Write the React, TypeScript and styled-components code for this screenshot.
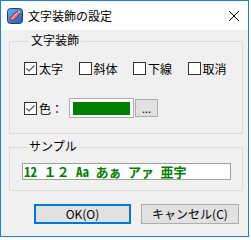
import styled, { createGlobalStyle } from "styled-components";

const GlobalStyle = createGlobalStyle`
  body {
    margin: 0;
    background: #ffffff;
    font-family: "Noto Sans CJK JP", sans-serif;
    font-size: 12px;
    color: #000;
  }
`;

const Window = styled.div`
  width: 249px;
  height: 237px;
  box-sizing: border-box;
  border: 1px solid #1883d7;
  background: #f0f0f0;
  display: flex;
  flex-direction: column;
`;

const TitleBar = styled.div`
  height: 29px;
  flex: none;
  background: #ffffff;
  display: flex;
  align-items: center;
  padding-left: 6px;
`;

const TitleText = styled.span`
  margin-left: 5px;
  font-size: 12px;
  line-height: 14px;
`;

const CloseIcon = styled.svg`
  margin-left: auto;
  margin-right: 9px;
`;

const Client = styled.div`
  flex: 1;
  display: flex;
  flex-direction: column;
  padding: 4px 0 0 8px;
`;

const GroupBox = styled.fieldset<{ $pad: string; $top?: number }>`
  margin: ${(p) => p.$top ?? 0}px 0 0 0;
  padding: ${(p) => p.$pad};
  width: 234px;
  box-sizing: border-box;
  border: 1px solid #dcdcdc;
  min-width: 0;
`;

const Legend = styled.legend`
  margin-left: 5px;
  padding: 0 2px 3px;
  font-size: 12px;
  line-height: 11px;
`;

const CheckRow = styled.div`
  display: flex;
  height: 13px;
  align-items: center;
`;

const CheckItem = styled.label<{ $w?: number }>`
  display: flex;
  align-items: center;
  width: ${(p) => (p.$w ? `${p.$w}px` : "auto")};
  font-size: 12px;
  line-height: 13px;
`;

const Box = styled.span`
  width: 13px;
  height: 13px;
  box-sizing: border-box;
  border: 1px solid #333333;
  background: #ffffff;
  margin-right: 2px;
  display: flex;
`;

const ColorRow = styled.div`
  display: flex;
  align-items: center;
  height: 20px;
  margin-top: 23px;
`;

const ColorLabel = styled.span`
  margin-right: 6px;
`;

const ColorSwatch = styled.div`
  width: 65px;
  height: 20px;
  box-sizing: border-box;
  border: 1px solid #adadad;
  background: #ffffff;
  padding: 3px 3px 2px 3px;
  display: flex;
`;

const SwatchFill = styled.div<{ $color: string }>`
  flex: 1;
  background: ${(p) => p.$color};
`;

const DotsButton = styled.button`
  width: 23px;
  height: 18px;
  margin-left: 1px;
  box-sizing: border-box;
  border: 1px solid #adadad;
  background: #e1e1e1;
  padding: 0;
  font-family: "Noto Sans CJK JP", sans-serif;
  font-size: 11px;
  line-height: 10px;
  color: #000;
`;

const SampleBox = styled.div`
  width: 209px;
  height: 17px;
  box-sizing: border-box;
  border: 1px solid #a0a0a0;
  background: #ffffff;
  padding-left: 1px;
  color: #008000;
  font-family: "Noto Sans Mono CJK JP", "Noto Sans CJK JP", monospace;
  font-weight: bold;
  font-size: 13px;
  line-height: 15px;
  white-space: pre;
  overflow: hidden;
`;

const ButtonRow = styled.div`
  display: flex;
  gap: 10px;
  margin-top: 13px;
  padding-left: 25px;
`;

const DialogButton = styled.button<{ $default?: boolean }>`
  width: ${(p) => (p.$default ? 97 : 98)}px;
  height: 20px;
  box-sizing: border-box;
  border: ${(p) => (p.$default ? "2px solid #0078d7" : "1px solid #adadad")};
  background: #e1e1e1;
  padding: 0;
  font-family: "Noto Sans CJK JP", sans-serif;
  font-size: 12px;
  line-height: 14px;
  color: #000;
`;

function AppIcon() {
  return (
    <svg width="16" height="16" viewBox="0 0 16 16">
      <defs>
        <linearGradient id="ib" x1="0" y1="0" x2="1" y2="1">
          <stop offset="0" stopColor="#6fb4f0" />
          <stop offset="1" stopColor="#1c5bb5" />
        </linearGradient>
      </defs>
      <rect x="0.5" y="0.5" width="15" height="15" rx="3" fill="url(#ib)" stroke="#1d3f78" />
      <g transform="rotate(-45 8 8)">
        <rect x="2" y="6" width="11" height="4" rx="1.5" fill="#e8707c" stroke="#7a1f2b" strokeWidth="0.8" />
        <line x1="4" y1="7.5" x2="12" y2="7.5" stroke="#fbd0d4" strokeWidth="0.8" />
        <path d="M13 6.5 L15 8 L13 9.5 Z" fill="#f0d8b0" />
      </g>
    </svg>
  );
}

function CheckBox({ checked }: { checked?: boolean }) {
  return (
    <Box>
      {checked && (
        <svg width="11" height="11" viewBox="0 0 11 11">
          <path d="M1.5 5.5 L4 8 L9.5 2.5" fill="none" stroke="#555" strokeWidth="1.2" />
        </svg>
      )}
    </Box>
  );
}

const styles = [
  { label: "太字", checked: true },
  { label: "斜体", checked: false },
  { label: "下線", checked: false },
  { label: "取消", checked: false },
];

export default function App() {
  return (
    <>
      <GlobalStyle />
      <Window>
        <TitleBar>
          <AppIcon />
          <TitleText>文字装飾の設定</TitleText>
          <CloseIcon width="10" height="10" viewBox="0 0 10 10">
            <path d="M0 0 L10 10 M10 0 L0 10" stroke="#000" strokeWidth="1" />
          </CloseIcon>
        </TitleBar>
        <Client>
          <GroupBox $pad="14px 0 15px 14px">
            <Legend>文字装飾</Legend>
            <CheckRow>
              {styles.map((s) => (
                <CheckItem key={s.label} $w={55}>
                  <CheckBox checked={s.checked} />
                  {s.label}
                </CheckItem>
              ))}
            </CheckRow>
            <ColorRow>
              <CheckItem>
                <CheckBox checked />
                <ColorLabel>色：</ColorLabel>
              </CheckItem>
              <ColorSwatch>
                <SwatchFill $color="#008000" />
              </ColorSwatch>
              <DotsButton>...</DotsButton>
            </ColorRow>
          </GroupBox>
          <GroupBox $pad="9px 0 10px 12px" $top={6}>
            <Legend>サンプル</Legend>
            <SampleBox>{"12 １２ Aa あぁ アァ 亜宇"}</SampleBox>
          </GroupBox>
          <ButtonRow>
            <DialogButton $default>OK(O)</DialogButton>
            <DialogButton>キャンセル(C)</DialogButton>
          </ButtonRow>
        </Client>
      </Window>
    </>
  );
}
